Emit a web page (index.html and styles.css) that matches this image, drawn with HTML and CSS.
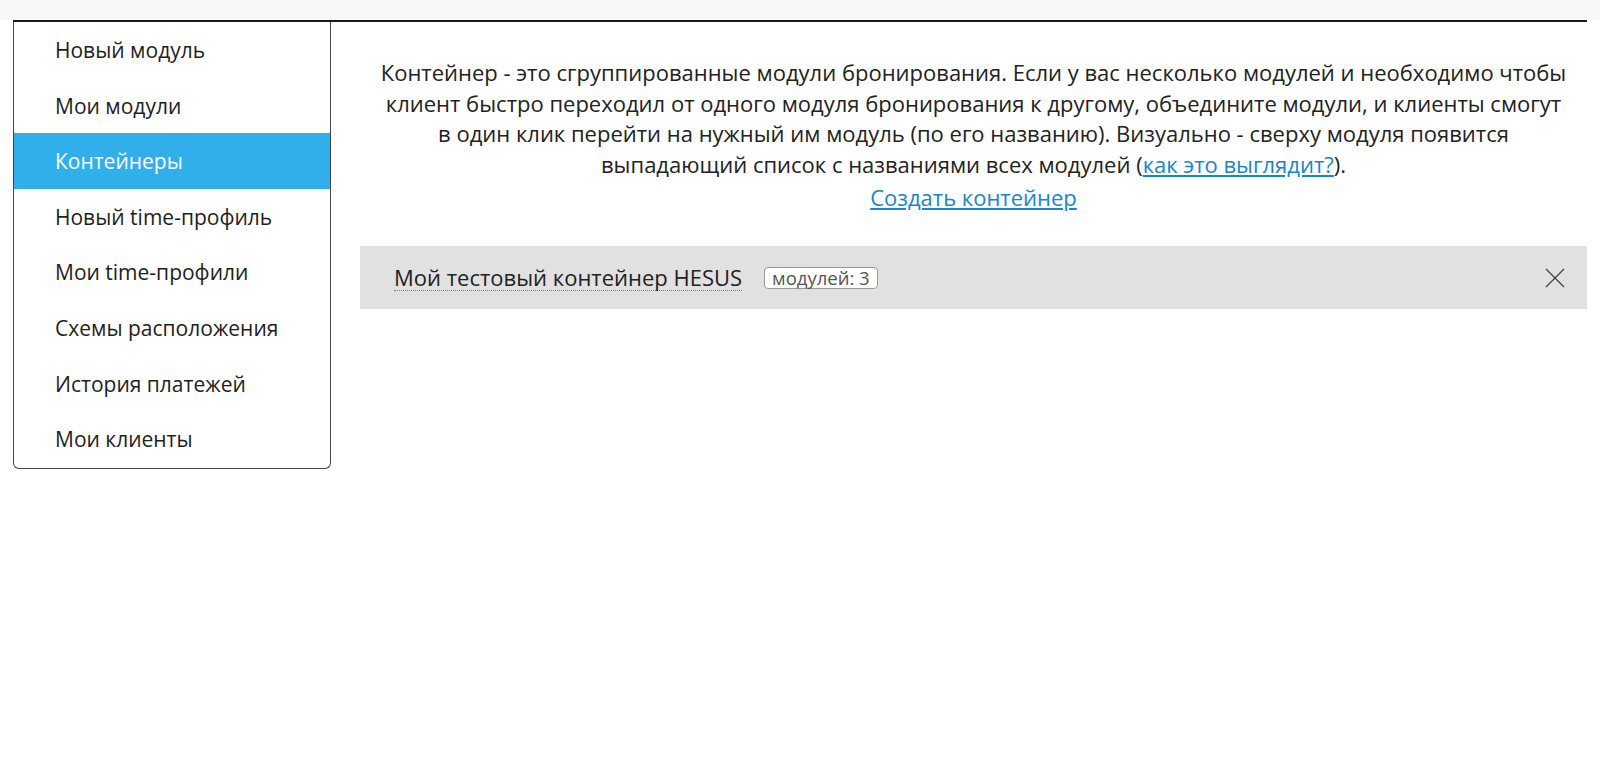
FILE: index.html
```html
<!DOCTYPE html>
<html lang="ru">
<head>
<meta charset="utf-8">
<link rel="stylesheet" href="styles.css">
</head>
<body>
<div class="topbar"></div>
<div class="layout">
  <nav class="sidebar">
    <a class="item" href="#">Новый модуль</a>
    <a class="item" href="#">Мои модули</a>
    <a class="item active" href="#">Контейнеры</a>
    <a class="item" href="#">Новый time-профиль</a>
    <a class="item" href="#">Мои time-профили</a>
    <a class="item" href="#">Схемы расположения</a>
    <a class="item" href="#">История платежей</a>
    <a class="item" href="#">Мои клиенты</a>
  </nav>
  <main class="main">
    <p class="intro">Контейнер - это сгруппированные модули бронирования. Если у вас несколько модулей и необходимо чтобы<br>клиент быстро переходил от одного модуля бронирования к другому, объедините модули, и клиенты смогут<br>в один клик перейти на нужный им модуль (по его названию). Визуально - сверху модуля появится<br>выпадающий список с названиями всех модулей (<a href="#">как это выглядит?</a>).</p>
    <p class="create"><a href="#">Создать контейнер</a></p>
    <div class="container-row">
      <span class="name">Мой тестовый контейнер HESUS</span>
      <span class="badge">модулей: 3</span>
      <span class="close">
        <svg width="20" height="20" viewBox="0 0 20 20"><path d="M1 1 L19 19 M19 1 L1 19" stroke="#3a3a3a" stroke-width="1.1" fill="none"/></svg>
      </span>
    </div>
  </main>
</div>
</body>
</html>
```

FILE: styles.css
```css
html, body { margin: 0; padding: 0; background: #fff; }
body { font-family: "Open Sans", "Liberation Sans", sans-serif; color: #222; }
.topbar { height: 20px; background: #f8f8f8; }
.layout { display: flex; margin: 0 13px; border-top: 2px solid #1a1a1a; }
.sidebar {
  width: 316px; flex: none; display: flex; flex-direction: column;
  border: 1px solid #444; border-top: none; border-radius: 0 0 6px 6px;
  align-self: flex-start;
  padding-bottom: 1px;
}
.item {
  display: block; height: 55.6px; line-height: 57px; padding-left: 41px;
  font-size: 21px; color: #1e1e1e; text-decoration: none;
  font-family: "Open Sans", sans-serif;
}
.item.active { background: #30afea; color: #fff; }
.main { flex: 1; padding: 0 0 0 29px; }
.intro {
  margin: 35px auto 0; max-width: 1215px; text-align: center;
  font-size: 22px; line-height: 30.6px; color: #222;
}
.intro a, .create a { color: #1a86c8; text-decoration: underline; }
.create { margin: 2px 0 0; text-align: center; font-size: 22px; line-height: 32px; }
.container-row {
  margin-top: 33px; height: 63px; background: #e1e1e1;
  display: flex; align-items: center; padding: 0 22px 0 34px;
}
.name {
  font-size: 22px; color: #222; border-bottom: 1px dotted #777; line-height: 26px;
}
.badge {
  margin-left: 22px; background: #fff; border: 1px solid #9a9a9a; border-radius: 4px;
  font-size: 18.5px; color: #555; padding: 0 7px; line-height: 20px;
}
.close { margin-left: auto; display: flex; }
```
